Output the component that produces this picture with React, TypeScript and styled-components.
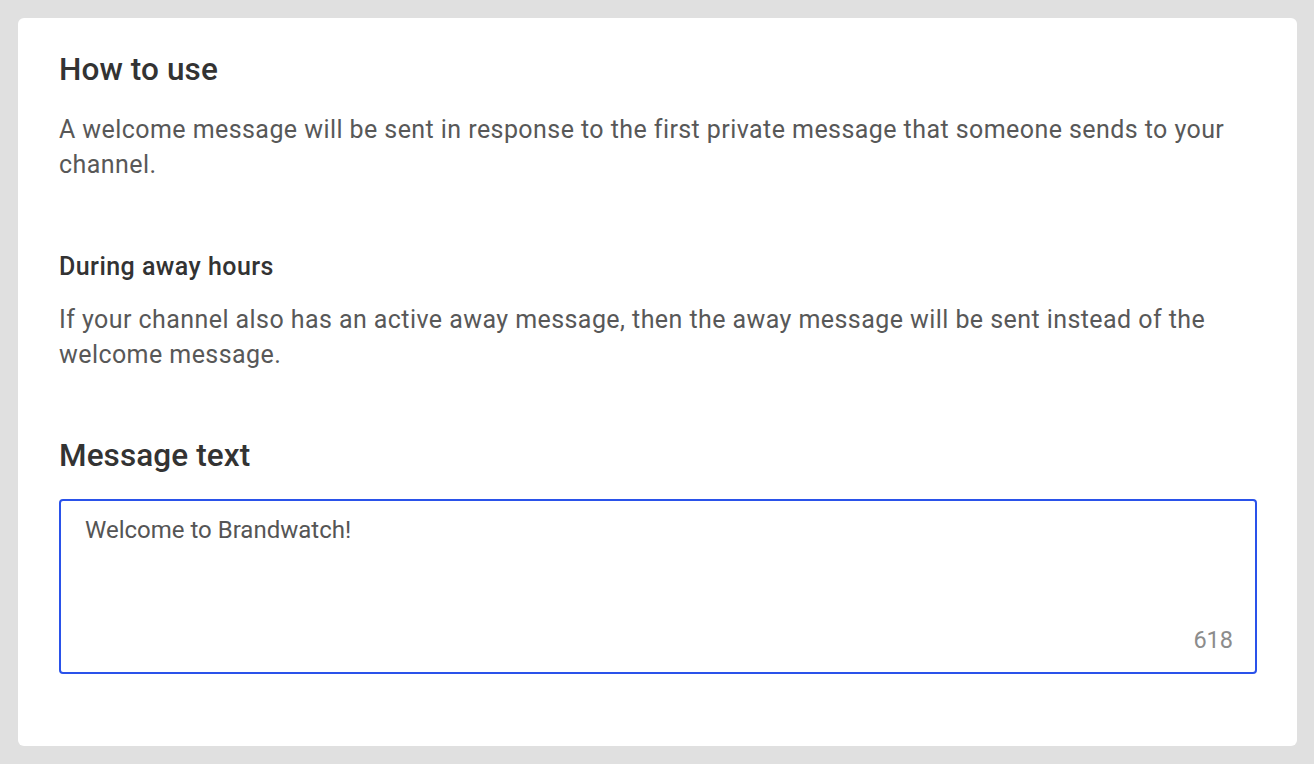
import React from 'react'
import styled, { createGlobalStyle } from 'styled-components'

const GlobalStyle = createGlobalStyle`
  html, body {
    margin: 0;
    padding: 0;
    background: #e0e0e0;
    font-family: Roboto, "Liberation Sans", sans-serif;
  }
  * { box-sizing: border-box; }
`

const App = () => {
  return (
    <Page>
      <GlobalStyle />
      <Card>
        <Title>How to use</Title>
        <Text $gap={24}>
          A welcome message will be sent in response to the first private message that someone sends to your
          channel.
        </Text>
        <Subtitle>During away hours</Subtitle>
        <Text $gap={20}>
          If your channel also has an active away message, then the away message will be sent instead of the
          welcome message.
        </Text>
        <Title $spaced>Message text</Title>
        <Field>
          <Input defaultValue="Welcome to Brandwatch!" />
          <Counter>618</Counter>
        </Field>
      </Card>
    </Page>
  )
}

export default App

const Page = styled.div`
  padding: 18px 17px 18px 18px;
  min-height: 764px;
`

const Card = styled.div`
  background: #fff;
  border-radius: 6px;
  padding: 34px 40px 72px 41px;
  display: flex;
  flex-direction: column;
`

const Title = styled.h2<{ $spaced?: boolean }>`
  margin: ${(p) => (p.$spaced ? '65.5px' : '0')} 0 0;
  font-size: 31.5px;
  line-height: 36px;
  font-weight: 500;
  letter-spacing: 0.1px;
  color: #333;
`

const Subtitle = styled.h3`
  margin: 70px 0 0;
  font-size: 25px;
  line-height: 30px;
  font-weight: 500;
  letter-spacing: 0.45px;
  color: #333;
`

const Text = styled.p<{ $gap: number }>`
  margin: ${(p) => p.$gap}px 0 0;
  font-size: 25px;
  line-height: 35px;
  letter-spacing: 0.43px;
  color: #585858;
`

const Field = styled.div`
  margin-top: 25px;
  height: 175px;
  border: 2px solid #2a52ea;
  border-radius: 4px;
  padding: 12px 22px 14px 24px;
  display: flex;
  flex-direction: column;
`

const Input = styled.textarea`
  flex: 1;
  border: none;
  outline: none;
  resize: none;
  padding: 0;
  margin: 0;
  font-family: Roboto, "Liberation Sans", sans-serif;
  font-size: 24px;
  line-height: 35px;
  color: #555;
  background: transparent;
`

const Counter = styled.span`
  align-self: flex-end;
  font-size: 23.5px;
  line-height: 35px;
  color: #8c8c8c;
`
